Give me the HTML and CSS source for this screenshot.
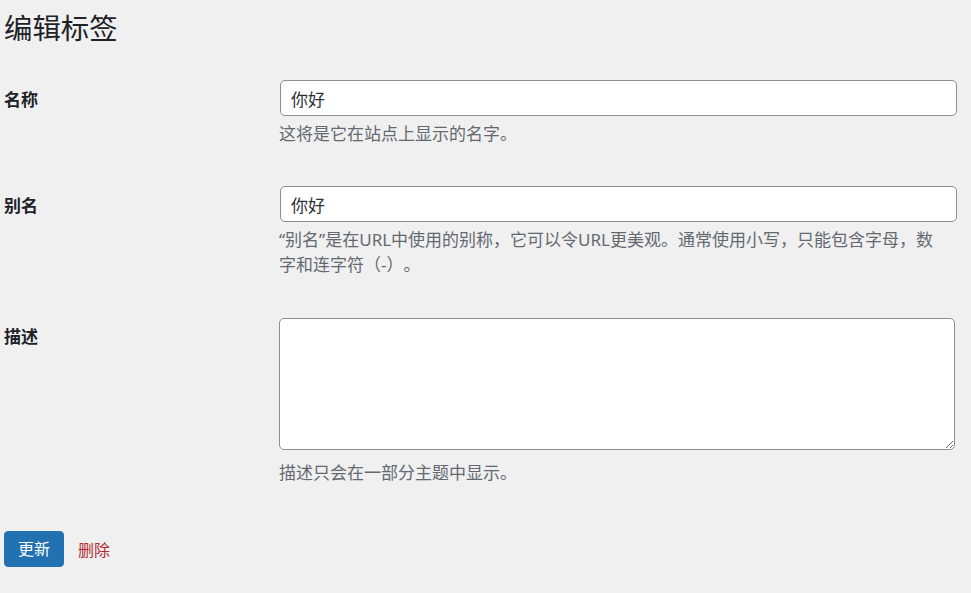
FILE: index.html
```html
<!DOCTYPE html>
<html lang="zh-CN">
<head>
<meta charset="utf-8">
<title>编辑标签</title>
<link rel="stylesheet" href="styles.css">
</head>
<body>
<div class="wrap">
  <h1 class="page-title">编辑标签</h1>
  <form class="edit-form">
    <div class="row">
      <label class="label" for="name">名称</label>
      <div class="field">
        <input class="text-input" id="name" type="text" value="你好">
        <p class="desc">这将是它在站点上显示的名字。</p>
      </div>
    </div>
    <div class="row">
      <label class="label" for="slug">别名</label>
      <div class="field">
        <input class="text-input" id="slug" type="text" value="你好">
        <p class="desc">“别名”是在URL中使用的别称，它可以令URL更美观。通常使用小写，只能包含字母，数<br>字和连字符（-）。</p>
      </div>
    </div>
    <div class="row">
      <label class="label" for="desc">描述</label>
      <div class="field">
        <textarea class="text-area" id="desc"></textarea>
        <p class="desc desc-area">描述只会在一部分主题中显示。</p>
      </div>
    </div>
    <div class="actions">
      <button class="btn-primary" type="button">更新</button>
      <a class="delete-link" href="#">删除</a>
    </div>
  </form>
</div>
</body>
</html>
```
FILE: styles.css
```css
html, body {
  margin: 0;
  background: #f0f0f1;
}
body {
  font-family: "Noto Sans", "Noto Sans CJK SC", sans-serif;
  color: #1d2327;
  text-spacing-trim: space-all;
}
.wrap {
  padding: 10px 14px 0 4px;
}
.page-title {
  margin: 0 0 34px;
  font-size: 28.4px;
  font-weight: 400;
  line-height: 36px;
  color: #1d2327;
}
.row {
  display: grid;
  grid-template-columns: 275px 1fr;
  margin-bottom: 40px;
}
.label {
  padding-top: 7.5px;
  font-size: 17px;
  font-weight: 700;
  line-height: 24px;
  color: #1d2327;
}
.field {
  min-width: 0;
}
.text-input {
  display: block;
  box-sizing: border-box;
  width: calc(100% - 1px);
  height: 36px;
  margin: 0 0 0 1px;
  padding: 0 10px;
  border: 1px solid #8c8f94;
  border-radius: 5px;
  background: #fff;
  font-family: "Noto Sans", "Noto Sans CJK SC", sans-serif;
  font-size: 17px;
  color: #2c3338;
  outline: none;
}
.text-area {
  display: block;
  box-sizing: border-box;
  width: calc(100% - 2px);
  height: 132px;
  margin: 0;
  padding: 2px 7px;
  border: 1px solid #8c8f94;
  border-radius: 5px;
  background: #fff;
  font-family: "Noto Sans", "Noto Sans CJK SC", sans-serif;
  font-size: 17px;
  color: #2c3338;
  outline: none;
}
.desc {
  margin: 5px 0 0;
  font-size: 17px;
  line-height: 25.2px;
  color: #646970;
  text-spacing-trim: space-all;
}
.desc-area {
  margin-top: 10px;
}
.actions {
  display: flex;
  align-items: center;
  padding-top: 6px;
}
.btn-primary {
  box-sizing: border-box;
  height: 36px;
  padding: 0 13px;
  border: 1px solid #2271b1;
  border-radius: 4px;
  background: #2271b1;
  color: #fff;
  font-family: "Noto Sans", "Noto Sans CJK SC", sans-serif;
  font-size: 16px;
  line-height: 34px;
  cursor: pointer;
}
.delete-link {
  margin-left: 14px;
  font-size: 16px;
  color: #b32d2e;
  text-decoration: none;
}
```
